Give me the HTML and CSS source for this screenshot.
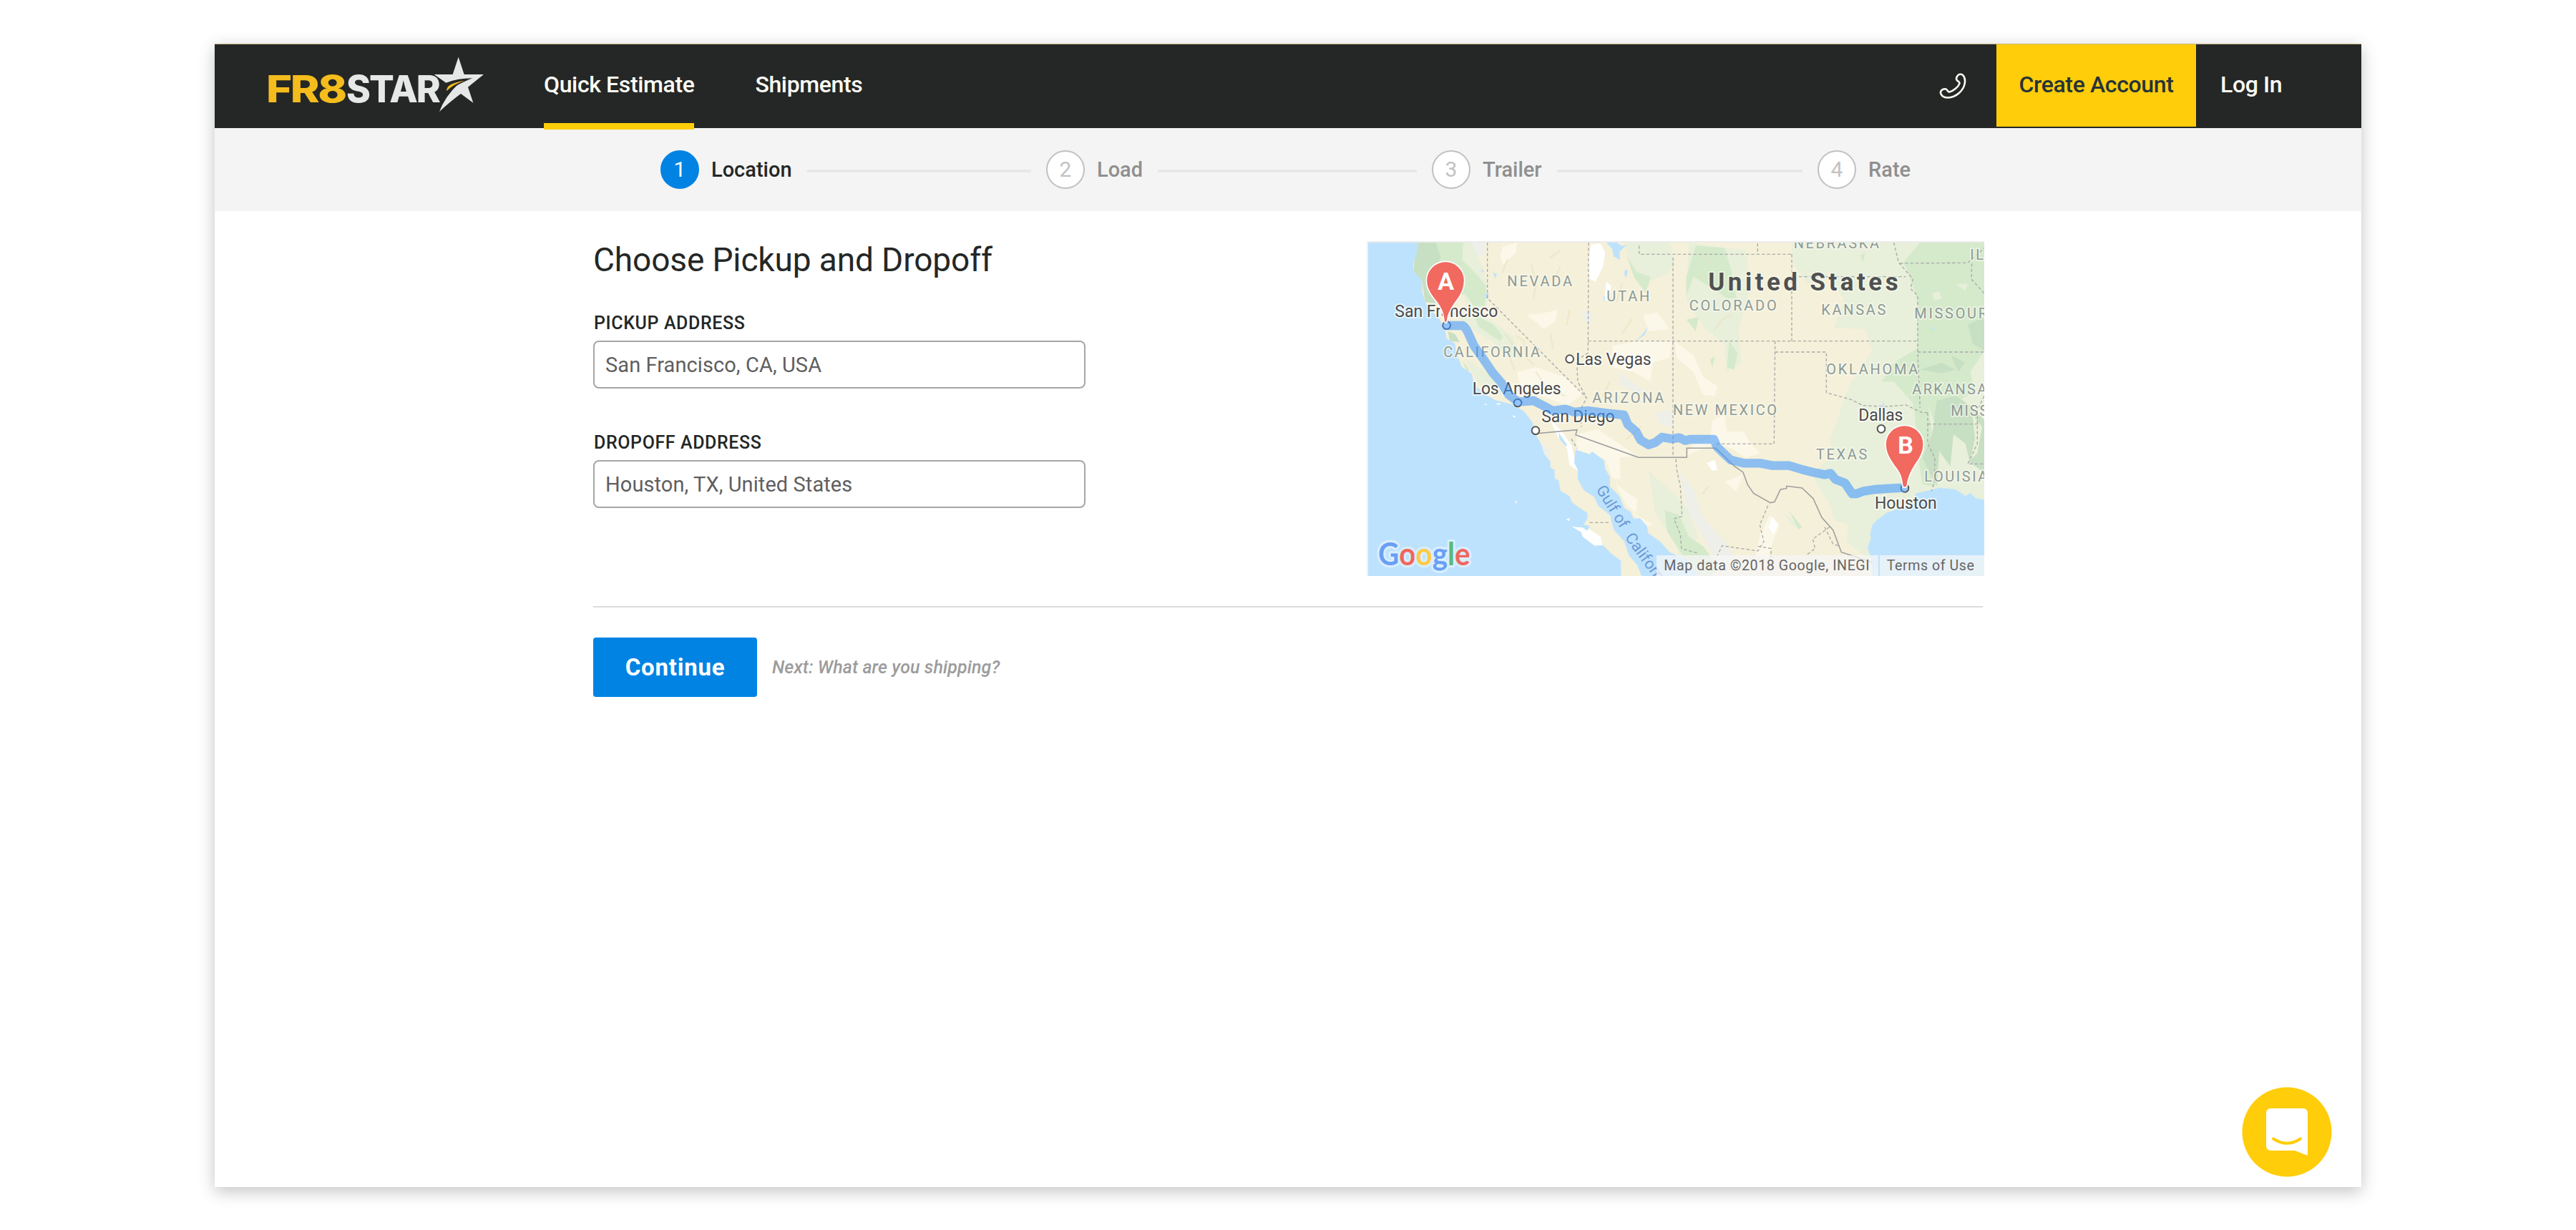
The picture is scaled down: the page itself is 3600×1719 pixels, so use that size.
FILE: index.html
```html
<!DOCTYPE html>
<html lang="en">
<head>
<meta charset="utf-8">
<title>FR8Star - Quick Estimate</title>
<link rel="stylesheet" href="styles.css">
</head>
<body>
<div class="window">
  <header class="nav">
    <svg class="logo" viewBox="0 0 330 100" role="img" aria-label="FR8STAR">
      <text class="logo-fr8" x="12" y="73" textLength="111" lengthAdjust="spacingAndGlyphs">FR8</text>
      <text class="logo-star" x="124" y="73" textLength="130" lengthAdjust="spacingAndGlyphs">STAR</text>
      <g transform="scale(.33333)">
        <path fill="#e6e8e8" d="M842 29L866 102H948L882 155L904 221L852 183Q812 212 762 258Q785 196 842 141Q868 122 902 118Q846 117 790 137L740 102H818Z"/>
        <path fill="#242726" d="M782 200Q782 136 900 118Q852 138 830 152Q806 172 782 200Z"/>
        <path fill="#f4bc1c" d="M793 171Q788 140 868 128Q822 142 793 171Z"/>
      </g>
    </svg>
    <nav class="links">
      <a class="link active">Quick Estimate</a>
      <a class="link">Shipments</a>
    </nav>
    <svg class="phone" viewBox="0 0 38 36" fill="none" stroke="#fffdf5" stroke-width="2.6" stroke-linejoin="round">
      <path d="M29 1.8C34 1 36.500 7 36 13C35 24 24 34 12 34.500C6 34.500 1.500 31 2 26.500C2.500 23.500 7 21.500 9.500 22.500C12 24 12.500 27 14.500 26.500C20 25 27 19.500 28.500 14.500C29 12 24.500 11.500 24 8.500C24 5.500 26.500 2 29 1.800Z"/>
    </svg>
    <a class="create">Create Account</a>
    <a class="login">Log In</a>
  </header>

  <ol class="steps">
    <li class="step current"><span class="num">1</span><span class="name">Location</span><span class="line"></span></li>
    <li class="step"><span class="num">2</span><span class="name">Load</span><span class="line"></span></li>
    <li class="step"><span class="num">3</span><span class="name">Trailer</span><span class="line"></span></li>
    <li class="step"><span class="num">4</span><span class="name">Rate</span></li>
  </ol>

  <main class="content">
    <section class="top">
      <form class="form">
        <h1>Choose Pickup and Dropoff</h1>
        <label for="pickup">PICKUP ADDRESS</label>
        <input id="pickup" type="text" value="San Francisco, CA, USA">
        <label for="dropoff">DROPOFF ADDRESS</label>
        <input id="dropoff" type="text" value="Houston, TX, United States">
      </form>
      <svg class="map" viewBox="36 57 2583 1398" preserveAspectRatio="none">
        <rect x="36" y="57" width="2583" height="1398" fill="#f5f0d9"/>

        <!-- pale arid areas -->
        <g fill="#fbf8ea">
          <path d="M600 75L660 57L655 100L600 150L590 110ZM700 360L760 355L830 340L820 390L770 420L740 390ZM1060 490L1160 470L1310 470L1300 540L1230 560L1220 640L1150 600L1060 580ZM660 600L740 580L860 620L940 690L870 740L760 700L680 690ZM910 860L1000 840L1160 950L1090 960L1095 1050L1060 1045L1030 965L910 925ZM1320 470L1400 530L1440 620L1500 660L1490 700L1440 695L1400 600L1330 540ZM1480 800L1530 780L1540 850L1610 850L1640 900L1680 940L1620 960L1560 920L1490 900L1370 950L1400 900L1470 880ZM1075 1070L1165 1135L1160 1190L1120 1160ZM1140 1185L1230 1240L1200 1250ZM1530 1060L1610 1030L1580 1100ZM1680 1280L1720 1200L1760 1240L1730 1320L1710 1390L1660 1370ZM1190 360L1250 350L1300 420L1210 430Z"/>
        </g>
        <g fill="#ffffff">
          <path d="M970 65L1010 60L1030 100L1020 160L990 220L965 210L960 130ZM1035 220L1055 240L1045 300L1025 300ZM800 800L850 850L890 910L900 960L915 1015L880 990L870 920L830 870ZM890 1248L950 1250L1010 1290L1020 1330L985 1328L930 1290ZM1715 1250L1730 1205L1755 1240L1735 1280ZM1455 980L1490 970L1500 1010L1480 1015Z"/>
        </g>
        <g fill="#efefea">
          <path d="M430 57L530 57L520 110L460 130L420 100ZM1090 600L1140 640L1200 680L1160 690L1090 650ZM1240 770L1310 760L1310 830L1260 820ZM930 340L975 350L970 400L940 385ZM1340 1020L1400 1090L1440 1210L1550 1330L1570 1390L1500 1400L1440 1290L1380 1190ZM745 880L800 930L800 970L775 940Z"/>
        </g>

        <!-- vegetation, light to dark -->
        <g fill="#e8efda">
          <path d="M1810 57H2619V1140H2400L2200 1200L2140 1330V1390L2040 1310L2050 1240L1990 1220L1970 1150L1910 1060L1900 1020L1990 950L1970 880L2000 810L2040 690L2080 590L2110 520L2100 420L1990 415L2030 300L1980 200L1880 230L1820 150Z"/>
          <path d="M1110 57L1300 57L1320 150L1290 190L1180 230L1140 160ZM1380 57L1620 90L1640 240L1590 420L1600 560L1540 600L1530 480L1450 420L1370 300ZM430 57L470 57L520 170L540 280L530 330L450 330L420 200ZM390 350L470 330L560 390L640 450L680 540L620 540L560 470L470 420ZM1210 1010L1260 1060L1320 1110L1380 1180L1420 1300L1350 1340L1290 1270L1240 1190ZM440 540L530 600L600 680L580 700L500 650ZM1310 1240L1390 1290L1440 1400L1370 1455L1340 1380ZM1780 1190L1850 1240L1860 1250L1820 1250Z"/>
        </g>
        <path fill="#f5f0d9" d="M1870 420L1990 415L2120 420L2150 510L2080 620L1990 720L1980 820L1900 900L1870 700Z"/>
        <g fill="#d4eacb">
          <path d="M2350 57H2619V510L2560 600L2580 680L2480 740L2440 900L2410 1080L2360 1070L2340 940L2330 800L2320 730L2240 640L2190 640L2240 560L2340 500V300L2300 180L2280 140Z"/>
          <path d="M245 57L435 57L430 130L500 200L530 240L525 320L480 325L440 270L360 330L275 305L260 215L228 180L228 150ZM480 360L560 400L600 450L590 470L500 410ZM1120 110L1160 180L1220 200L1200 270L1150 200ZM1410 70L1530 80L1560 180L1580 290L1540 290L1480 250L1400 200L1370 280L1370 200ZM1550 470L1585 520L1570 590L1540 580ZM1370 380L1420 370L1410 430ZM1280 1180L1340 1200L1380 1290L1440 1330L1500 1410L1480 1455L1400 1455L1350 1360L1290 1270ZM1800 1180L1855 1250L1840 1260ZM2100 110L2120 100L2110 140ZM1470 550L1490 530L1480 580ZM430 550L460 590L450 600Z"/>
        </g>
        <g fill="#c7dfc3">
          <path d="M245 57L320 57L340 120L310 200L330 270L320 310L275 305L262 215L228 180L228 150ZM370 430L400 440L420 475L380 470ZM2550 400L2619 370V510L2570 480ZM2350 590L2440 560L2500 590L2440 605ZM2420 720L2500 700L2560 740L2619 800V1020L2560 980L2540 900L2490 860L2470 1060L2420 1080L2360 960L2400 860ZM2480 530L2540 560L2510 600Z"/>
        </g>
        <g fill="#e8efda">
          <path d="M2385 740L2410 810L2400 860L2390 790ZM2570 780L2610 830L2590 940L2560 970L2580 880ZM2430 930L2480 1000L2540 1060L2580 1110L2420 1085ZM2400 270L2430 260L2440 290L2410 300ZM2500 230L2550 230L2540 260Z"/>
        </g>
        <g fill="none" stroke="#e9e0bf" stroke-width="7" opacity=".55" stroke-linecap="round" stroke-linejoin="round">
          <path d="M600 180L620 130M720 150L740 220L730 290M840 160L820 210M610 440L640 480L630 540L650 590M690 480L700 540L730 570M800 440L810 500M660 450L690 470M880 340L870 400M1100 230L1080 300M740 600L780 660L860 700M1140 380L1100 440M1050 640L1020 700M1180 830L1120 880M1440 100L1480 150M1430 210L1480 200M1560 360L1520 380L1490 420M1460 1080L1440 1110M840 90L800 120"/>
        </g>

        <!-- water -->
        <g fill="#bde2fd">
          <path d="M36 57H245L240 100L225 150L228 180L262 215V260L275 305L300 340L335 378L358 420L365 460L400 480L405 520L430 580L470 605L480 650L520 690L570 718L640 735L690 765L725 810L735 855L760 900L775 945L800 975V1000L818 1010V1045L835 1055L842 1098L880 1120L890 1145L912 1162L955 1190V1215L940 1240L965 1245L955 1265L935 1252L890 1248L930 1272L935 1290L985 1328L1020 1325L1060 1365L1095 1390L1097 1455H36Z"/>
          <path d="M905 925L965 945L975 933L1025 970L1030 1005L1050 1040V1080L1090 1120L1110 1170L1135 1185L1150 1215L1175 1212L1205 1245L1210 1275L1260 1310L1300 1355L1380 1390L1420 1455H1182L1165 1410L1130 1370L1110 1310L1065 1260L1050 1200L1000 1160L985 1125L940 1095L915 1050V1010L900 980Z"/>
          <path d="M2619 1135L2585 1130L2560 1108L2540 1120L2500 1092L2430 1085L2370 1100L2330 1110V1145L2280 1165L2210 1190L2170 1220L2150 1240L2140 1280L2145 1295L2130 1335L2145 1380L2150 1455H2619Z"/>
          <path d="M1035 57H1080L1095 70L1118 70L1090 95L1092 130L1065 115L1060 85ZM1113 170L1125 175L1118 205L1110 190ZM560 182L576 190L568 208ZM507 175L522 172L518 182ZM526 270L540 270L540 292L528 290ZM835 855L870 905L865 912L838 880ZM1210 408L1195 445L1155 470L1185 445ZM1022 282L1030 285L1026 308ZM2196 725L2200 745L2185 750ZM2400 410L2412 418L2402 425Z"/>
        </g>
        <path fill="#fff" d="M866 1218L881 1212L879 1224ZM651 1140L660 1142L657 1152ZM520 736L535 732L530 739ZM638 781L655 785L650 792ZM570 733L592 730L585 738Z"/>

        <!-- state and country borders -->
        <g fill="none" stroke="#a9a9a9" stroke-width="4" stroke-dasharray="13 9">
          <path d="M536 57V290L952 708L925 760L930 830M960 57L958 520L910 550L915 640L952 708M958 470H2340M1172 70V106H1812M1314 120V958M1669 60V106M1812 106V470M1842 200H2290M1742 470L1738 901H1490M1742 516H1957V686L2060 715L2110 740L2200 745L2290 738L2360 770H2382M2340 516H2619M2240 57L2260 140L2320 210L2310 250L2340 280V516L2350 750M2265 144L2550 142L2619 80M2567 145L2565 210L2619 270M2382 770V900L2412 960L2410 1060L2398 1100M2382 818H2600M2619 700L2590 760L2590 900L2550 985H2619M888 880L912 920M1326 965L1330 1010L1345 1080L1352 1205L1318 1215L1345 1280L1350 1340L1420 1360M965 1231H1050M1712 1160L1678 1240L1695 1310L1670 1350L1520 1328L1500 1370M1670 1330L1725 1340L1725 1380M1970 1250L1900 1300L1910 1340L1870 1370M1950 1250L1985 1320L2010 1330"/>
        </g>
        <path fill="none" stroke="#9b9d9d" stroke-width="4.500" d="M745 857L912 842L906 863L1170 958H1372V919H1493L1572 995L1608 1020L1627 1072L1652 1108L1722 1148L1740 1144L1765 1092L1790 1088V1078L1855 1086L1902 1130L1938 1210L1985 1262L2020 1355L2080 1375L2150 1398"/>

        <!-- region names -->
        <g class="region">
          <text x="619" y="240" textLength="272">NEVADA</text>
          <text x="1036" y="302" textLength="180">UTAH</text>
          <text x="352" y="537" textLength="404">CALIFORNIA</text>
          <text x="976" y="728" textLength="300">ARIZONA</text>
          <text x="1314" y="781" textLength="435">NEW MEXICO</text>
          <text x="1382" y="342" textLength="366">COLORADO</text>
          <text x="1820" y="81" textLength="358">NEBRASKA</text>
          <text x="1936" y="360" textLength="270">KANSAS</text>
          <text x="2326" y="375" textLength="305">MISSOUR</text>
          <text x="2560" y="129" textLength="56">IL</text>
          <text x="1957" y="609" textLength="384">OKLAHOMA</text>
          <text x="2317" y="693" textLength="312">ARKANSA</text>
          <text x="2479" y="783" textLength="156">MISS</text>
          <text x="1914" y="965" textLength="214">TEXAS</text>
          <text x="2368" y="1058" textLength="264">LOUISIA</text>
        </g>
        <text class="country" x="1462" y="258" textLength="796">United States</text>
        <text class="sea" transform="translate(990 1092) rotate(58)">Gulf of</text>
        <text class="sea" transform="translate(1111 1294) rotate(54)">California</text>

        <g fill="#fff" stroke="#555" stroke-width="6">
          <circle cx="365" cy="404" r="16"/>
          <circle cx="881" cy="545" r="16"/>
          <circle cx="663" cy="729" r="16"/>
          <circle cx="738" cy="845" r="16"/>
          <circle cx="2187" cy="838" r="16"/>
          <circle cx="2286" cy="1087" r="16"/>
        </g>
        <g class="city">
          <text x="148" y="369" textLength="432">San Francisco</text>
          <text x="907" y="570" textLength="316">Las Vegas</text>
          <text x="473" y="693" textLength="372">Los Angeles</text>
          <text x="763" y="810" textLength="307">San Diego</text>
          <text x="2092" y="803" textLength="186">Dallas</text>
          <text x="2160" y="1172" textLength="260">Houston</text>
        </g>

        <!-- driving route -->
        <path fill="none" stroke="#3e98ff" stroke-opacity=".57" stroke-width="37" stroke-linejoin="round" stroke-linecap="round" d="M365 405H432Q445 412 455 435L480 490L512 535L560 605L595 645L625 695L665 725L730 720L765 738L810 762L865 755L900 768L960 762L1040 773L1108 780L1125 820L1160 850L1178 885L1212 905L1240 895L1268 873L1310 880L1340 875L1365 887L1385 882H1485L1500 915L1555 968L1610 982H1680L1730 992H1800L1850 1007L1900 1020L1950 1030L1975 1025L1995 1050L2035 1065L2065 1110L2085 1110L2110 1100L2160 1092L2225 1088L2280 1085"/>

        <!-- pins -->
        <g class="pin">
          <path d="M360 136C317 136 280 172 280 216C280 255 306 285 322 305C342 332 350 348 354 384C355 396 366 396 368 384C371 352 390 325 408 300C426 277 440 250 440 216C440 172 404 136 360 136Z"/>
          <text x="362" y="256" text-anchor="middle">A</text>
        </g>
        <g class="pin" transform="translate(1923 687)">
          <path d="M362 136C317 136 282 172 282 216C282 255 304 285 318 305C340 332 348 348 353 388C354 400 371 400 373 388C376 352 392 325 408 300C426 277 442 250 442 216C442 172 406 136 362 136Z"/>
          <text x="366" y="256" text-anchor="middle">B</text>
        </g>

        <!-- attribution -->
        <text class="google" x="78" y="1410" textLength="386" lengthAdjust="spacingAndGlyphs"><tspan fill="#6a9ff5">G</tspan><tspan fill="#f0665e">o</tspan><tspan fill="#fccb45">o</tspan><tspan fill="#6a9ff5">g</tspan><tspan fill="#5cb877">l</tspan><tspan fill="#f0665e">e</tspan></text>
        <rect x="1245" y="1368" width="930" height="87" fill="#f5f5f5" fill-opacity=".75"/>
        <rect x="2181" y="1368" width="438" height="87" fill="#f5f5f5" fill-opacity=".75"/>
        <text class="credit" x="1276" y="1430" textLength="862">Map data ©2018 Google, INEGI</text>
        <text class="credit" x="2210" y="1430" textLength="367">Terms of Use</text>
      </svg>
    </section>

    <section class="actions">
      <button class="continue" type="button">Continue</button>
      <span class="next">Next: What are you shipping?</span>
    </section>
  </main>

  <svg class="chat" viewBox="0 0 126 126">
    <circle cx="63" cy="63" r="62.500" fill="#ffcd0a"/>
    <path fill="#fff" d="M41 30H85Q92 30 92 37V96L74 89H41Q34 89 34 82V37Q34 30 41 30Z"/>
    <path fill="none" stroke="#ffcd0a" stroke-width="4" stroke-linecap="round" d="M44 72.500Q63 85 82 72.500"/>
  </svg>
</div>
</body>
</html>
```
FILE: styles.css
```css
* { box-sizing: border-box; }

body {
  margin: 0;
  height: 1719px;
  padding: 61px 300px 0;
  overflow: hidden;
  background: #fff;
  color: #242726;
  font-family: Roboto, "Liberation Sans", sans-serif;
}

.window {
  position: relative;
  width: 3000px;
  height: 1598px;
  background: #fff;
  box-shadow: 0 6px 22px rgba(0, 0, 0, .24);
}

/* Header */
.nav {
  display: flex;
  height: 118px;
  border-top: 1px solid #c9b880;
  background: #242726;
  font-size: 32px;
  font-weight: 500;
  line-height: 112px;
  letter-spacing: -.37px;
  color: #fffdf5;
  white-space: nowrap;
}

.logo {
  width: 330px;
  height: 100px;
  margin: 8px 0 0 60px;
}

.logo text {
  font-family: Inter, "Liberation Sans", sans-serif;
  font-size: 52px;
  font-weight: 800;
  letter-spacing: -2px;
}

.logo-fr8 { fill: #f4bc1c; }
.logo-star { fill: #e6e8e8; }

.links {
  display: flex;
  gap: 85px;
  margin-left: 70px;
}

.link { position: relative; }

.active::after {
  content: "";
  position: absolute;
  left: 0;
  right: 0;
  top: 110px;
  height: 9px;
  background: #ffcd0a;
}

.phone {
  width: 38px;
  height: 36px;
  margin: 40px 42px 0 auto;
}

.create {
  width: 279px;
  height: 115px;
  background: #ffcd0a;
  color: #263338;
  text-align: center;
}

.login {
  width: 231px;
  padding-left: 34px;
}

/* Progress steps */
.steps {
  display: flex;
  height: 116px;
  margin: 0;
  padding: 0 0 0 623px;
  list-style: none;
  background: #f4f4f4;
  color: #8f8f8f;
  font-size: 29px;
  font-weight: 500;
}

.step {
  display: flex;
  align-items: center;
  width: 539px;
}

.num {
  width: 54px;
  height: 54px;
  margin-right: 17px;
  border: 2px solid #c0c0c0;
  border-radius: 50%;
  background: #fff;
  color: #c2c2c2;
  font-size: 30px;
  font-weight: 400;
  line-height: 50px;
  text-align: center;
}

.current { color: #242726; }

.current .num {
  border-color: #0083e3;
  background: #0083e3;
  color: #fff;
}

.line {
  flex: 1;
  height: 4px;
  margin: 4px 21px 0;
  background: #e8e8e8;
}

/* Form and map */
.content {
  width: 1942px;
  margin-left: 529px;
}

.top {
  display: flex;
  justify-content: space-between;
  height: 554px;
  border-bottom: 2px solid #dcdcdc;
}

.form {
  display: flex;
  flex-direction: column;
  width: 688px;
  padding-top: 40px;
}

h1 {
  margin: 0 0 45px;
  font-size: 46px;
  font-weight: 400;
  line-height: 56px;
  letter-spacing: -.12px;
}

label {
  padding-left: 1px;
  margin-bottom: 8px;
  font-size: 25px;
  font-weight: 500;
  line-height: 32px;
  letter-spacing: .6px;
}

input {
  height: 67px;
  margin: 0 0 60px;
  padding: 0 15px;
  border: 2px solid #a6a6a6;
  border-radius: 8px;
  background: #fff;
  color: #5f5f5f;
  font: 400 29px Roboto, "Liberation Sans", sans-serif;
  letter-spacing: .08px;
}

.map {
  width: 863px;
  height: 468px;
  margin: 42px -2px 0 0;
  border-top: 2px solid #ececec;
  border-left: 2px solid #eef2f4;
}

.map text { font-family: Roboto, "Liberation Sans", sans-serif; paint-order: stroke; stroke-linejoin: round; }
.map .region { fill: #8d9a96; stroke: rgba(250, 250, 240, .6); stroke-width: 12; font-size: 60px; }
.map .country { fill: #4f5151; stroke: rgba(250, 250, 240, .6); stroke-width: 12; font-size: 105px; font-weight: 700; }
.map .city { fill: #4c4c4c; stroke: rgba(255, 255, 255, .65); stroke-width: 12; font-size: 69px; }
.map .sea { fill: #6c9bd6; stroke: rgba(190, 226, 253, .7); stroke-width: 8; font-size: 66px; }
.map .credit { fill: #666; font-size: 59px; }
.map .google { font-family: Lato, "Liberation Sans", sans-serif; font-size: 130px; font-weight: 700; stroke: #d9eefe; stroke-width: 20; }
.pin path { fill: #f1695f; stroke: #fff; stroke-width: 5; }
.map .pin text { fill: #fff; font-size: 102px; font-weight: 700; }

/* Actions */
.actions {
  display: flex;
  align-items: center;
  gap: 21px;
  margin-top: 42px;
}

.continue {
  width: 229px;
  height: 83px;
  padding: 0;
  border: 0;
  border-radius: 4px;
  background: #0083e3;
  color: #fff;
  font: 700 33px Roboto, "Liberation Sans", sans-serif;
  letter-spacing: .75px;
}

.next {
  color: #9c9c9c;
  font-size: 25px;
  font-style: italic;
  font-weight: 500;
  letter-spacing: .1px;
}

/* Chat launcher */
.chat {
  position: absolute;
  right: 41px;
  bottom: 14px;
  width: 126px;
  height: 126px;
}
```
